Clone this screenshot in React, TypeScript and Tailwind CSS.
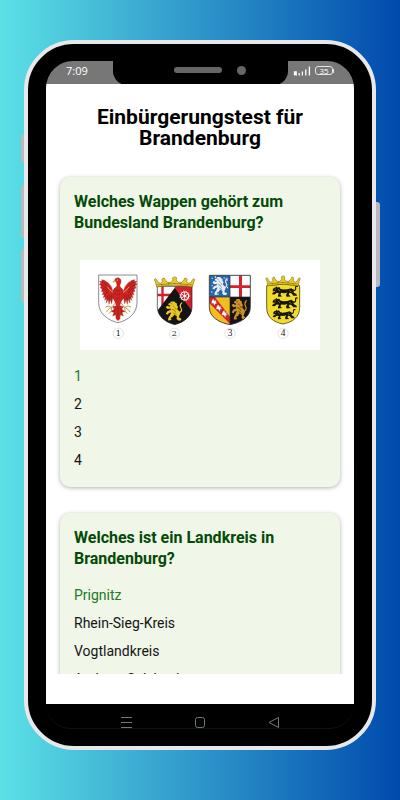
import type { ReactNode } from "react";
import { clsx } from "clsx";

interface Question {
  id: string;
  text: string;
  options: string[];
  correct: number;
  picture?: ReactNode;
}

const SHIELD_2 = "M232 79H336V140C336 168 314 186 284 194C254 186 232 168 232 140Z";
const SHIELD_3 = "M388 46H511V142C511 172 481 188 450 194C418 188 388 172 388 142Z";

function RampantLion({ transform, fill, line }: { transform: string; fill: string; line: string }) {
  return (
    <g transform={transform}>
      <path
        d="M37 33Q47 29 42 21Q37 13 44 6"
        fill="none"
        stroke={fill}
        strokeWidth="3.5"
        strokeLinecap="round"
      />
      <path
        d="M18 2L24 2L27 6L31 8L31 13L34 17L32 24L38 30Q42 35 38 40L36 46L43 50L42 55L34 55L30 50L31 43L24 39L20 45L14 48L17 54L7 55L8 48L13 40L16 33L10 34L6 39L1 36L6 29L14 26L14 22L6 23L1 18L5 14L12 17L14 14L8 12L9 7L13 7L14 3Z"
        fill={fill}
      />
      <path d="M15 8L19 9M20 14L25 18M17 24L24 26L28 33M21 34L30 39M27 20L29 25" fill="none" stroke={line} strokeWidth="1.6" />
    </g>
  );
}

function PassantLion({ transform }: { transform: string }) {
  return (
    <g transform={transform}>
      <path d="M60 10Q72 14 71 5Q69 -1 76 0" fill="none" stroke="#17140a" strokeWidth="3.5" strokeLinecap="round" />
      <path
        d="M2 9L6 4L10 4L12 0L17 3L22 2L25 7L34 9L46 8L58 5L65 10L65 17L73 21L75 26L64 26L59 20L53 18L50 23L56 28L44 29L42 24L46 17L38 19L28 18L25 23L30 28L18 29L18 24L21 19L14 18L8 23L0 22L2 18L11 13L3 13Z"
        fill="#17140a"
      />
      <path d="M8 8L12 8M18 8L24 13M52 12L58 15" stroke="#d9bd20" strokeWidth="1.5" />
      <path d="M2 13L6 14" stroke="#c8301e" strokeWidth="2" />
    </g>
  );
}

function Crown({ transform }: { transform: string }) {
  return (
    <g transform={transform} stroke="#5c4a0c" strokeWidth="1.3">
      <path
        d="M8 31L4 13L1 10L4 6L8 9L12 17L18 20L24 14L22 9L25 4L29 5L31 10L38 17L46 17L52 10L50 4L56 0L62 4L60 10L66 17L74 17L81 10L83 5L87 4L90 9L88 14L94 20L100 17L104 9L108 6L111 10L108 13L104 31Q56 21 8 31Z"
        fill="#e9c924"
      />
      <path d="M8 25Q56 16 104 25" fill="none" />
      <g fill="#8f7516" stroke="none">
        <circle cx="22" cy="24" r="2" />
        <circle cx="40" cy="21" r="2" />
        <circle cx="56" cy="20" r="2" />
        <circle cx="72" cy="21" r="2" />
        <circle cx="90" cy="24" r="2" />
      </g>
    </g>
  );
}

function EagleWing({ transform }: { transform?: string }) {
  return (
    <g transform={transform}>
      <path
        d="M105 84L98 92L94 80L85 69L73 61L65 59L67 64L59 64L63 69L58 73L64 77L61 84L67 87L64 94L70 96L67 104L73 103L70 113L76 110L74 121L80 115L79 129L85 118L87 133L91 119L95 131L98 115L105 122Z"
        fill="#cf2420"
        stroke="#84201c"
        strokeWidth="1"
      />
      <path
        d="M67 66L80 74L89 87M64 75L76 80L85 92M67 87L76 88L83 99M74 105L80 97M80 117L84 104M87 120L89 106M95 117V104"
        fill="none"
        stroke="#761815"
        strokeWidth="1.6"
      />
      <path d="M82 80Q88 92 100 97" fill="none" stroke="#e9cf86" strokeWidth="2" />
    </g>
  );
}

function BrandenburgArms() {
  return (
    <g>
      <path
        d="M56 45H171V128C171 162 143 181 114 188C84 181 56 162 56 128Z"
        fill="#fdfdfd"
        stroke="#55565c"
        strokeWidth="2"
      />
      <EagleWing />
      <EagleWing transform="matrix(-1 0 0 1 229 0)" />
      <path
        d="M104 62Q104 53 115 53Q125 56 123 67L119 77L126 88L127 116L119 137L131 140L125 147L135 155L126 157L130 168L121 164L120 176L114 182L108 176L107 164L98 168L102 157L93 155L103 147L97 140L109 137L101 116L102 88L111 77L109 67Z"
        fill="#cf2420"
        stroke="#84201c"
        strokeWidth="1"
      />
      <path
        d="M108 90L114 94L120 90M107 101L114 105L121 101M108 113L114 117L120 113M114 138V174M106 146L103 158M122 146L125 158"
        fill="none"
        stroke="#741816"
        strokeWidth="1.6"
      />
      <path d="M105 60L99 62L98 69L104 66L108 67Z" fill="#d9b648" />
      <circle cx="112" cy="60" r="1.6" fill="#fff" />
      <path
        d="M105 130L95 142L84 138L77 141M95 142L84 149L80 155M95 142L94 153L88 160M124 130L134 142L145 138L152 141M134 142L145 149L149 155M134 142L135 153L141 160"
        fill="none"
        stroke="#bfa35a"
        strokeWidth="3"
        strokeLinecap="round"
      />
    </g>
  );
}

function RhinelandPalatinateArms() {
  return (
    <g>
      <clipPath id="shield-rp">
        <path d={SHIELD_2} />
      </clipPath>
      <g clipPath="url(#shield-rp)">
        <path d="M230 78H284V196H230Z" fill="#fbfbfb" />
        <path d="M284 78H340V196H284Z" fill="#d3202a" />
        <path d="M244 78H251V101H284V109H251V196H244V109H230V101H244Z" fill="#d3202a" />
        <path d="M284 84L340 158V198H228V158Z" fill="#141414" />
      </g>
      <g fill="none" stroke="#fff">
        <circle cx="314" cy="108" r="12" strokeWidth="3.5" />
        <path d="M314 95V121M303 101L325 115M303 115L325 101" strokeWidth="2.5" />
        <circle cx="314" cy="108" r="15" strokeWidth="2" strokeDasharray="3 5" />
      </g>
      <circle cx="314" cy="108" r="3.5" fill="#fff" />
      <RampantLion transform="translate(256 122) scale(1.12 1.08)" fill="#ecc725" line="#6b5710" />
      <path d={SHIELD_2} fill="none" stroke="#201f1c" strokeWidth="2" />
      <Crown transform="translate(221 50) scale(1.12 1)" />
    </g>
  );
}

function SaarlandArms() {
  return (
    <g>
      <clipPath id="shield-sl">
        <path d={SHIELD_3} />
      </clipPath>
      <g clipPath="url(#shield-sl)">
        <path d="M387 45H450V111H387Z" fill="#2566a8" />
        <path d="M450 45H513V111H450Z" fill="#fbfbfb" />
        <path d="M387 111H450V196H387Z" fill="#f3bd1f" />
        <path d="M450 111H513V196H450Z" fill="#171310" />
        <path d="M477 45H486V76H513V84H486V111H477V84H450V76H477Z" fill="#d8232e" />
        <path d="M387 110H404L450 170V192L387 128Z" fill="#d3232a" />
        <path
          d="M396 121L401 117L403 123L409 120L407 127L412 129L405 132L403 137L400 130L394 130ZM411 137L416 134L418 140L424 138L421 144L427 147L420 148L419 155L415 148L408 147ZM428 155L433 151L435 158L441 156L438 162L444 165L437 166L436 173L432 166L425 165Z"
          fill="#fff"
          stroke="#8e7777"
          strokeWidth="0.8"
        />
        <path
          d="M395 55H398M404 51H408M431 54H434M440 60H443M395 77H398M394 96H397M413 102H416M437 100H440M441 83H444"
          stroke="#e6edf5"
          strokeWidth="4"
        />
        <RampantLion transform="translate(396 49) scale(1.02 1.02)" fill="#e9edf1" line="#3b6792" />
        <RampantLion transform="translate(454 115) scale(1.02 1.16)" fill="#c9922a" line="#3a220a" />
        <path d="M450 45V194M388 111H512" stroke="#29282a" strokeWidth="2" />
      </g>
      <path d={SHIELD_3} fill="none" stroke="#29282a" strokeWidth="2.5" />
    </g>
  );
}

function BadenWuerttembergArms() {
  return (
    <g>
      <path
        d="M560 77Q609 68 659 77V142C659 172 638 186 609 192C580 186 560 172 560 142Z"
        fill="#f2dc2b"
        stroke="#4b431a"
        strokeWidth="2.5"
      />
      <PassantLion transform="translate(576 79) scale(1 1.08)" />
      <PassantLion transform="translate(576 114) scale(1 1.08)" />
      <PassantLion transform="translate(578 149) scale(.88 1)" />
      <Crown transform="translate(556 47) scale(.95 1)" />
    </g>
  );
}

const LABELS = [
  { x: 115, font: "'DejaVu Serif', serif", size: 24 },
  { x: 283, font: "'DejaVu Serif', serif", size: 24 },
  { x: 450, font: "'Liberation Serif', serif", size: 28 },
  { x: 609, font: "'Liberation Serif', serif", size: 28 },
];

function CoatsOfArms() {
  return (
    <svg
      viewBox="0 0 720 270"
      role="img"
      aria-label="Vier Wappen, nummeriert von 1 bis 4"
      className="block w-full bg-white"
    >
      <BrandenburgArms />
      <RhinelandPalatinateArms />
      <SaarlandArms />
      <BadenWuerttembergArms />
      {LABELS.map(({ x, font, size }, i) => (
        <g key={x}>
          <circle cx={x} cy="220" r="15.5" fill="#fff" stroke="#c4c4c4" strokeWidth="1.5" />
          <text
            x={x}
            y="229"
            textAnchor="middle"
            fontSize={size}
            fontFamily={font}
            fill="#151515"
          >
            {i + 1}
          </text>
        </g>
      ))}
    </svg>
  );
}

const QUESTIONS: Question[] = [
  {
    id: "wappen",
    text: "Welches Wappen gehört zum Bundesland Brandenburg?",
    options: ["1", "2", "3", "4"],
    correct: 0,
    picture: <CoatsOfArms />,
  },
  {
    id: "landkreis",
    text: "Welches ist ein Landkreis in Brandenburg?",
    options: ["Prignitz", "Rhein-Sieg-Kreis", "Vogtlandkreis", "Amberg-Sulzbach"],
    correct: 0,
  },
];

function QuestionCard({ question }: { question: Question }) {
  return (
    <article className="shrink-0 rounded-[10px] bg-[#f0f6e8] px-3.5 pt-3.5 pb-[13px] shadow-[0_1px_4px_rgba(0,0,0,0.3)]">
      <h2 className="text-base leading-[21px] font-bold text-[#034a06]">{question.text}</h2>
      {question.picture && <div className="mx-1.5 mt-[27px]">{question.picture}</div>}
      <ul className="mt-3">
        {question.options.map((option, i) => (
          <li
            key={option}
            className={clsx(
              "text-sm leading-7",
              i === question.correct ? "text-[#23782a]" : "text-[#151515]"
            )}
          >
            {option}
          </li>
        ))}
      </ul>
    </article>
  );
}

function StatusBar() {
  return (
    <div className="flex h-[23px] shrink-0 justify-center bg-[#777777] text-white">
      <div className="w-[67px] pl-5 font-['Open_Sans',sans-serif] text-[11px] leading-5">7:09</div>
      <div className="flex h-6 w-[175px] shrink-0 items-start justify-end gap-[15px] rounded-b-[14px] bg-black pt-[5px] pr-[42px]">
        <span className="mt-px h-1.5 w-12 rounded-full bg-[#666666]" />
        <span className="size-[9px] rounded-full bg-[#666666]" />
      </div>
      <div className="flex w-[66px] items-start gap-1 pt-[5px] pl-[5px]">
        <svg viewBox="0 0 18 10" className="h-2.5 w-[18px]" aria-label="Signal">
          <path
            d="M1.5 9.5V6H3.2V7.8H1.5M2.4 7.8L3.6 9.5M6.2 9.5V7M9.4 9.5V5.5M12.8 9.5V3.5M16.4 9.5V0.5"
            fill="none"
            stroke="#fff"
            strokeWidth="1.3"
          />
        </svg>
        <span className="flex items-center">
          <span className="flex h-[9px] w-[18px] items-center justify-center rounded-[3px] border border-[#e5e5e5] font-['Open_Sans',sans-serif] text-[8px] leading-none">
            35
          </span>
          <span className="h-1 w-px bg-[#e5e5e5]" />
        </span>
      </div>
    </div>
  );
}

function NavBar() {
  return (
    <nav className="flex h-[25px] shrink-0 items-end justify-center gap-[62px] rounded-b-[27px] border-b border-[#07151d] bg-black text-[#777777]">
      <button type="button" aria-label="Menü">
        <svg viewBox="0 0 12 12" className="size-3" fill="none" stroke="currentColor">
          <path d="M1 1.5H12M1 6.5H12M1 11.5H12" />
        </svg>
      </button>
      <button type="button" aria-label="Startseite">
        <svg viewBox="0 0 12 12" className="size-3" fill="none" stroke="currentColor">
          <rect x="1.5" y="1.5" width="9" height="10" rx="2" />
        </svg>
      </button>
      <button type="button" aria-label="Zurück">
        <svg viewBox="0 0 12 12" className="size-3" fill="none" stroke="currentColor" strokeLinejoin="round">
          <path d="M10.5 1.5V11.5L1 6.5Z" />
        </svg>
      </button>
    </nav>
  );
}

export default function App() {
  return (
    <div className="flex h-screen bg-linear-to-r/srgb from-[#5ce1e6] to-[#004aad] px-6 pt-10 pb-[50px] font-[Roboto,sans-serif]">
      <div className="relative flex min-w-0 flex-1 rounded-[50px] border-4 border-[#e8e8ea] bg-black px-[18px] py-[17px]">
        <span className="absolute top-[90px] -left-[7px] h-[29px] w-[3px] rounded-l-[3px] bg-[#b9b9b9]" />
        <span className="absolute top-[141px] -left-[7px] h-[53px] w-[3px] rounded-l-[3px] bg-[#b9b9b9]" />
        <span className="absolute top-[205px] -left-[7px] h-[53px] w-[3px] rounded-l-[3px] bg-[#b9b9b9]" />
        <span className="absolute top-[158px] -right-2 h-[85px] w-1 rounded-r-[3px] bg-[#b9b9b9]" />

        <div className="flex min-w-0 flex-1 flex-col overflow-hidden rounded-t-[27px]">
          <StatusBar />
          <main className="flex min-h-0 flex-1 flex-col bg-white pt-[23px] pb-[30px]">
            <h1 className="px-3.5 text-center text-[21px] leading-[21px] font-bold text-black">
              Einbürgerungstest für Brandenburg
            </h1>
            <div className="flex min-h-0 flex-1 flex-col gap-[26px] overflow-hidden px-3.5 pt-7">
              {QUESTIONS.map((question) => (
                <QuestionCard key={question.id} question={question} />
              ))}
            </div>
          </main>
          <NavBar />
        </div>
      </div>
    </div>
  );
}
